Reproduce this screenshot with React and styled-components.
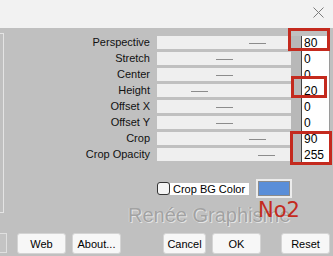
import { Fragment } from 'react'
import styled, { createGlobalStyle } from 'styled-components'

const Global = createGlobalStyle`
  html, body {
    margin: 0;
    background: #c0c0c0;
    font-family: "Liberation Sans", Arial, sans-serif;
    font-size: 11px;
    color: #000;
  }
`

const Page = styled.div`
  position: relative;
  width: 333px;
  height: 256px;
  overflow: hidden;
  background: #c0c0c0;
`

const TitleBar = styled.div`
  height: 28px;
  background: #f2f2f2;
  display: flex;
  justify-content: flex-end;
  align-items: flex-start;
  padding: 7px 9px 0 0;
  box-sizing: border-box;
`

const Body = styled.div`
  display: flex;
  flex-direction: column;
`

const Upper = styled.div`
  display: flex;
  padding-top: 5px;
`

const Frame = styled.div`
  width: 4px;
  height: 180px;
  box-sizing: border-box;
  border: 1px solid #e4e4e4;
  border-left: none;
  flex-shrink: 0;
`

const Right = styled.div`
  display: flex;
  flex-direction: column;
  padding-top: 3px;
`

const ParamGrid = styled.div`
  display: grid;
  grid-template-columns: 153px 134px 10px 29px;
  grid-auto-rows: 16px;
`

const Label = styled.div`
  height: 13px;
  line-height: 13px;
  text-align: right;
  padding-right: 7px;
  white-space: nowrap;
  color: #111;
`

const Track = styled.div`
  position: relative;
  height: 13px;
  background: #efefef;
`

const Thumb = styled.div`
  position: absolute;
  top: 7px;
  width: 17px;
  height: 1px;
  background: #8c8c8c;
`

const Gap = styled.div`
  background: #b8b8b8;
`

const Value = styled.div`
  background: #fff;
  border-left: 1px solid #444;
  border-right: 1px solid #9a9a9a;
  font-size: 12px;
  line-height: 12px;
  padding: 1px 0 0 2px;
  overflow: hidden;
`

const CheckRow = styled.div`
  display: flex;
  align-items: center;
  height: 19px;
  margin-top: 15px;
  padding-left: 153px;
`

const Box = styled.div`
  width: 13px;
  height: 13px;
  box-sizing: border-box;
  border: 1px solid #333;
  border-radius: 3px;
  background: #f4f4f4;
`

const CheckLabel = styled.div`
  width: 79px;
  height: 12px;
  line-height: 12px;
  background: #fff;
  padding-left: 3px;
  box-sizing: border-box;
  white-space: nowrap;
`

const Swatch = styled.div`
  width: 36px;
  height: 19px;
  margin-left: 7px;
  box-sizing: border-box;
  border: 2px solid #ececec;
  box-shadow: inset 0 0 0 1px #8a8a8a;
  background: #5a8ed8;
`

const Watermark = styled.div`
  margin-top: 7px;
  padding-left: 124px;
  font-size: 20px;
  line-height: 20px;
  color: #a2a2a2;
  white-space: nowrap;
  text-shadow: 1px 1px 0 #e4e4e4, -1px 0 0 #d2d2d2;
`

const ButtonRow = styled.div`
  display: flex;
  margin-top: 8px;
  height: 21px;
`

const Stub = styled.div`
  width: 7px;
  height: 20px;
  box-sizing: border-box;
  border: 1px solid #e0e0e0;
  border-left: none;
  background: #c4c4c4;
`

const Button = styled.div`
  width: ${p => p.w}px;
  margin-left: ${p => p.ml}px;
  height: 21px;
  box-sizing: border-box;
  background: #f7f7f7;
  border: 1px solid #d4d4d4;
  border-radius: 3px;
  display: flex;
  align-items: center;
  justify-content: center;
  font-size: 11px;
`

const Mark = styled.div`
  position: absolute;
  left: ${p => p.x}px;
  top: ${p => p.y}px;
  width: ${p => p.w}px;
  height: ${p => p.h}px;
  box-sizing: border-box;
  border: 3px solid #c42a1e;
`

const Note = styled.div`
  position: absolute;
  left: 258px;
  top: 200px;
  font-family: "DejaVu Sans", sans-serif;
  font-size: 21px;
  line-height: 21px;
  color: #c42a1e;
`

const params = [
  { label: 'Perspective', value: '80', thumb: 92 },
  { label: 'Stretch', value: '0', thumb: 59 },
  { label: 'Center', value: '0', thumb: 59 },
  { label: 'Height', value: '20', thumb: 34 },
  { label: 'Offset X', value: '0', thumb: 59 },
  { label: 'Offset Y', value: '0', thumb: 59 },
  { label: 'Crop', value: '90', thumb: 92 },
  { label: 'Crop Opacity', value: '255', thumb: 101 },
]

function App() {
  return (
    <Page>
      <Global />
      <TitleBar>
        <svg width="11" height="11" viewBox="0 0 11 11">
          <path d="M0.5 0.5L10.5 10.5M10.5 0.5L0.5 10.5" stroke="#7c7c7c" strokeWidth="1" fill="none" />
        </svg>
      </TitleBar>
      <Body>
        <Upper>
          <Frame />
          <Right>
            <ParamGrid>
              {params.map(p => (
                <Fragment key={p.label}>
                  <Label>{p.label}</Label>
                  <Track>
                    <Thumb style={{ left: p.thumb }} />
                  </Track>
                  <Gap />
                  <Value>{p.value}</Value>
                </Fragment>
              ))}
            </ParamGrid>
            <CheckRow>
              <Box />
              <CheckLabel>Crop BG Color</CheckLabel>
              <Swatch />
            </CheckRow>
            <Watermark>Renée Graphisme</Watermark>
          </Right>
        </Upper>
        <ButtonRow>
          <Stub />
          <Button w={49} ml={10}>Web</Button>
          <Button w={49} ml={6}>About...</Button>
          <Button w={43} ml={42}>Cancel</Button>
          <Button w={49} ml={6}>OK</Button>
          <Button w={49} ml={20}>Reset</Button>
        </ButtonRow>
      </Body>
      <Mark x={288} y={28} w={42} h={23} />
      <Mark x={291} y={76} w={36} h={22} />
      <Mark x={290} y={131} w={42} h={34} />
      <Note>No2</Note>
    </Page>
  )
}

export default App
